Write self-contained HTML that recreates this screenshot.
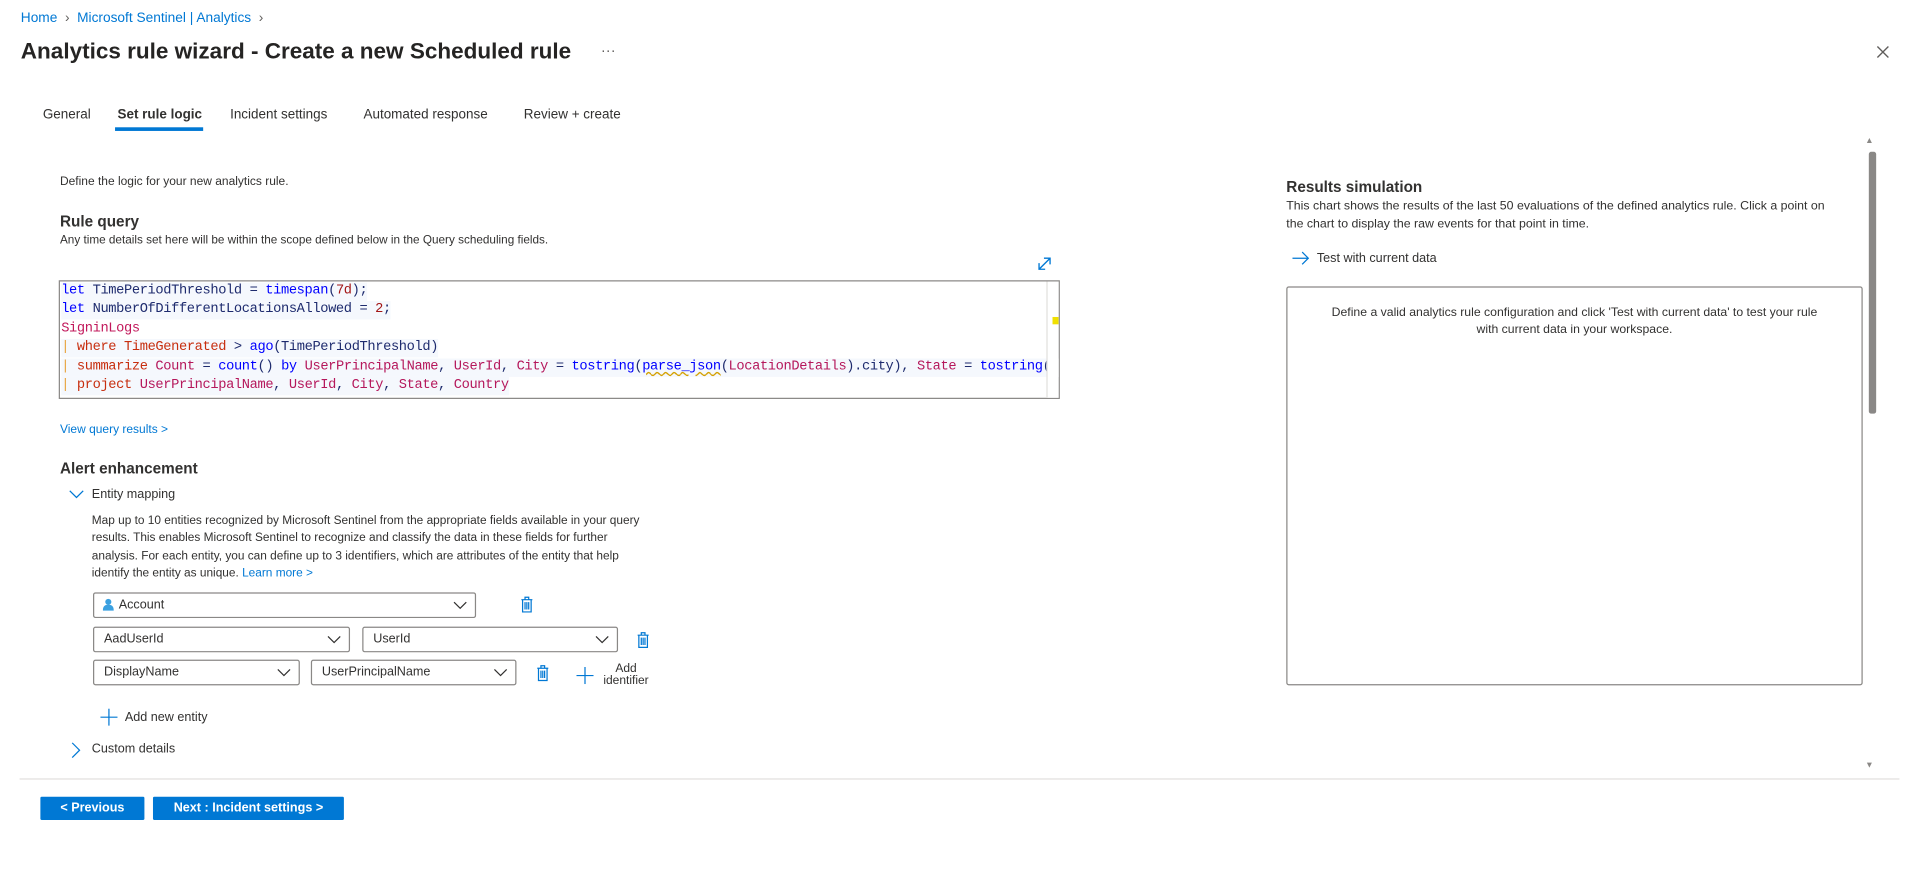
<!DOCTYPE html>
<html><head><meta charset="utf-8"><style>
html,body{margin:0;padding:0;background:#fff;overflow:hidden;width:1919px;height:869px}
#p{position:absolute;left:0;top:0;width:1568px;height:710px;transform:scale(1.22385);transform-origin:0 0;font-family:"Liberation Sans",sans-serif;color:#323130}
.a{position:absolute;white-space:nowrap}
.b{font-weight:bold}
.blue{color:#0078d4}
.dd{position:absolute;border:1px solid #8a8886;border-radius:2px;height:21px;box-sizing:border-box;font-size:10.3px;line-height:20px;padding-left:8px}
.dd svg{position:absolute;right:6px;top:6px}
.code{position:absolute;left:48px;top:229px;width:818px;height:97px;border:1px solid #8a8886;box-sizing:border-box;overflow:hidden;font-family:"Liberation Mono",monospace;font-size:11.2px}
.code div{position:absolute;left:1px;white-space:pre;height:15px;line-height:15px;background:#f5f8fd;letter-spacing:-0.3px;color:#1e2b6e}
.k{color:#0000ff}.r{color:#c72e0f}.m{color:#a31515}.pl{color:#b5175b}
.btn{position:absolute;background:#0078d4;color:#fff;font-weight:bold;font-size:10.3px;text-align:center;line-height:19px;height:19px;border-radius:1px}
</style></head><body><div id="p">
<div class="a blue" style="left:17px;top:9px;font-size:11.2px">Home &nbsp;<span style="color:#605e5c">&#8250;</span>&nbsp; Microsoft Sentinel | Analytics &nbsp;<span style="color:#605e5c">&#8250;</span></div>
<div class="a" style="left:17px;top:31px;font-size:18.4px;font-weight:bold;color:#252423">Analytics rule wizard - Create a new Scheduled rule</div>
<div class="a" style="left:491px;top:34px;font-size:12px;color:#605e5c">···</div>
<svg class="a" style="left:1533px;top:37px" width="11" height="11"><path d="M1 1L10 10M10 1L1 10" stroke="#605e5c" stroke-width="1.1"/></svg>
<div class="a" style="left:35px;top:88px;font-size:11px">General</div>
<div class="a b" style="left:96px;top:88px;font-size:11px">Set rule logic</div>
<div class="a" style="left:94px;top:104px;width:72px;height:3px;background:#0078d4"></div>
<div class="a" style="left:188px;top:88px;font-size:11px">Incident settings</div>
<div class="a" style="left:297px;top:88px;font-size:11px">Automated response</div>
<div class="a" style="left:428px;top:88px;font-size:11px">Review + create</div>

<div class="a" style="left:49px;top:143px;font-size:9.8px">Define the logic for your new analytics rule.</div>
<div class="a b" style="left:49px;top:174px;font-size:12.5px">Rule query</div>
<div class="a" style="left:49px;top:191px;font-size:9.6px">Any time details set here will be within the scope defined below in the Query scheduling fields.</div>
<svg class="a" style="left:847px;top:209px" width="13" height="13"><path d="M2 11L11 2M6 2H11V7M2 6V11H7" stroke="#0078d4" fill="none" stroke-width="1.1"/></svg>
<div class="code">
<div style="top:1px"><span class="k">let</span> TimePeriodThreshold = <span class="k">timespan</span>(<span class="m">7d</span>);</div>
<div style="top:16px"><span class="k">let</span> NumberOfDifferentLocationsAllowed = <span class="m">2</span>;</div>
<div style="top:32px;color:#c2185b;background:none">SigninLogs</div>
<div style="top:47px"><span style="color:#e8a33d">|</span> <span class="r">where</span> <span class="r">TimeGenerated</span> &gt; <span class="k">ago</span>(TimePeriodThreshold)</div>
<div style="top:63px"><span style="color:#e8a33d">|</span> <span class="r">summarize</span> <span class="pl">Count</span> = <span class="k">count</span>() <span class="k">by</span> <span class="pl">UserPrincipalName</span>, <span class="pl">UserId</span>, <span class="pl">City</span> = <span class="k">tostring</span>(<span class="k" style="text-decoration:underline wavy #d4a000">parse_json</span>(<span class="pl">LocationDetails</span>).city), <span class="pl">State</span> = <span class="k">tostring</span>(<span class="k">parse_json</span></div>
<div style="top:78px"><span style="color:#e8a33d">|</span> <span class="r">project</span> <span class="pl">UserPrincipalName</span>, <span class="pl">UserId</span>, <span class="pl">City</span>, <span class="pl">State</span>, <span class="pl">Country</span></div>
<div style="left:806px;top:0;width:12px;height:97px;background:#fff;border-left:1px solid #e1dfdd"></div>
<div style="left:811px;top:29px;width:5px;height:6px;background:#f0e000"></div>
</div>
<div class="a blue" style="left:49px;top:346px;font-size:9.8px">View query results &gt;</div>
<div class="a b" style="left:49px;top:376px;font-size:12.5px">Alert enhancement</div>
<svg class="a" style="left:56px;top:400px" width="13" height="8"><path d="M1 1L6.5 6.5L12 1" stroke="#0078d4" fill="none"/></svg>
<div class="a" style="left:75px;top:399px;font-size:10.3px">Entity mapping</div>
<div class="a" style="left:75px;top:419px;font-size:9.7px;line-height:14.3px;white-space:normal;width:455px">Map up to 10 entities recognized by Microsoft Sentinel from the appropriate fields available in your query results. This enables Microsoft Sentinel to recognize and classify the data in these fields for further analysis. For each entity, you can define up to 3 identifiers, which are attributes of the entity that help identify the entity as unique. <span class="blue">Learn more &gt;</span></div>

<div class="dd" style="left:76px;top:484px;width:313px;padding-left:20px"><svg style="position:absolute;left:7px;top:4px" width="9" height="10"><circle cx="4.5" cy="2.8" r="2.5" fill="#3aa0e0"/><path d="M0 10Q0 5 4.5 5Q9 5 9 10Z" fill="#3aa0e0"/></svg>Account<svg width="12" height="8"><path d="M1 1L6 6L11 1" stroke="#323130" fill="none"/></svg></div>
<div class="dd" style="left:76px;top:512px;width:210px">AadUserId<svg width="12" height="8"><path d="M1 1L6 6L11 1" stroke="#323130" fill="none"/></svg></div>
<div class="dd" style="left:296px;top:512px;width:209px">UserId<svg width="12" height="8"><path d="M1 1L6 6L11 1" stroke="#323130" fill="none"/></svg></div>
<div class="dd" style="left:76px;top:539px;width:169px">DisplayName<svg width="12" height="8"><path d="M1 1L6 6L11 1" stroke="#323130" fill="none"/></svg></div>
<div class="dd" style="left:254px;top:539px;width:168px">UserPrincipalName<svg width="12" height="8"><path d="M1 1L6 6L11 1" stroke="#323130" fill="none"/></svg></div>
<svg class="a" style="left:425px;top:487px" width="11" height="14"><path d="M1 3H10M4 3V1H7V3M2 3V13H9V3M4 5V11M5.5 5V11M7 5V11" stroke="#0078d4" fill="none"/></svg>
<svg class="a" style="left:520px;top:516px" width="11" height="14"><path d="M1 3H10M4 3V1H7V3M2 3V13H9V3M4 5V11M5.5 5V11M7 5V11" stroke="#0078d4" fill="none"/></svg>
<svg class="a" style="left:438px;top:543px" width="11" height="14"><path d="M1 3H10M4 3V1H7V3M2 3V13H9V3M4 5V11M5.5 5V11M7 5V11" stroke="#0078d4" fill="none"/></svg>
<svg class="a" style="left:471px;top:545px" width="14" height="14"><path d="M7 0V14M0 7H14" stroke="#0078d4"/></svg>
<div class="a" style="left:489px;top:542px;font-size:9.8px;line-height:10px;text-align:center;width:45px">Add<br>identifier</div>
<svg class="a" style="left:82px;top:579px" width="14" height="14"><path d="M7 0V14M0 7H14" stroke="#0078d4"/></svg>
<div class="a" style="left:102px;top:581px;font-size:10.3px">Add new entity</div>
<svg class="a" style="left:58px;top:606px" width="8" height="14"><path d="M1 1L7 7L1 13" stroke="#0078d4" fill="none"/></svg>
<div class="a" style="left:75px;top:607px;font-size:10.3px">Custom details</div>

<div class="a" style="left:1051px;top:146px;font-size:12.5px" ><b>Results simulation</b></div>
<div class="a" style="left:1051px;top:161px;font-size:10.1px;line-height:15px">This chart shows the results of the last 50 evaluations of the defined analytics rule. Click a point on<br>the chart to display the raw events for that point in time.</div>
<svg class="a" style="left:1056px;top:205px" width="14" height="12"><path d="M0 6H13M8 1L13 6L8 11" stroke="#0078d4" fill="none"/></svg>
<div class="a" style="left:1076px;top:206px;font-size:10.3px">Test with current data</div>
<div class="a" style="left:1051px;top:234px;width:471px;height:326px;border:1px solid #8a8886;box-sizing:border-box;border-radius:2px"></div>
<div class="a" style="left:1051px;top:249px;width:471px;text-align:center;font-size:10px;line-height:14px">Define a valid analytics rule configuration and click 'Test with current data' to test your rule<br>with current data in your workspace.</div>

<div class="a" style="left:1524px;top:112px;font-size:7px;color:#8a8886">&#9650;</div>
<div class="a" style="left:1527px;top:124px;width:6px;height:214px;background:#8a8886;border-radius:2px"></div>
<div class="a" style="left:1524px;top:622px;font-size:7px;color:#8a8886">&#9660;</div>
<div class="a" style="left:16px;top:636px;width:1536px;height:1px;background:#e1dfdd"></div>
<div class="btn" style="left:33px;top:651px;width:85px">&lt; Previous</div>
<div class="btn" style="left:125px;top:651px;width:156px">Next : Incident settings &gt;</div>
</div></body></html>
